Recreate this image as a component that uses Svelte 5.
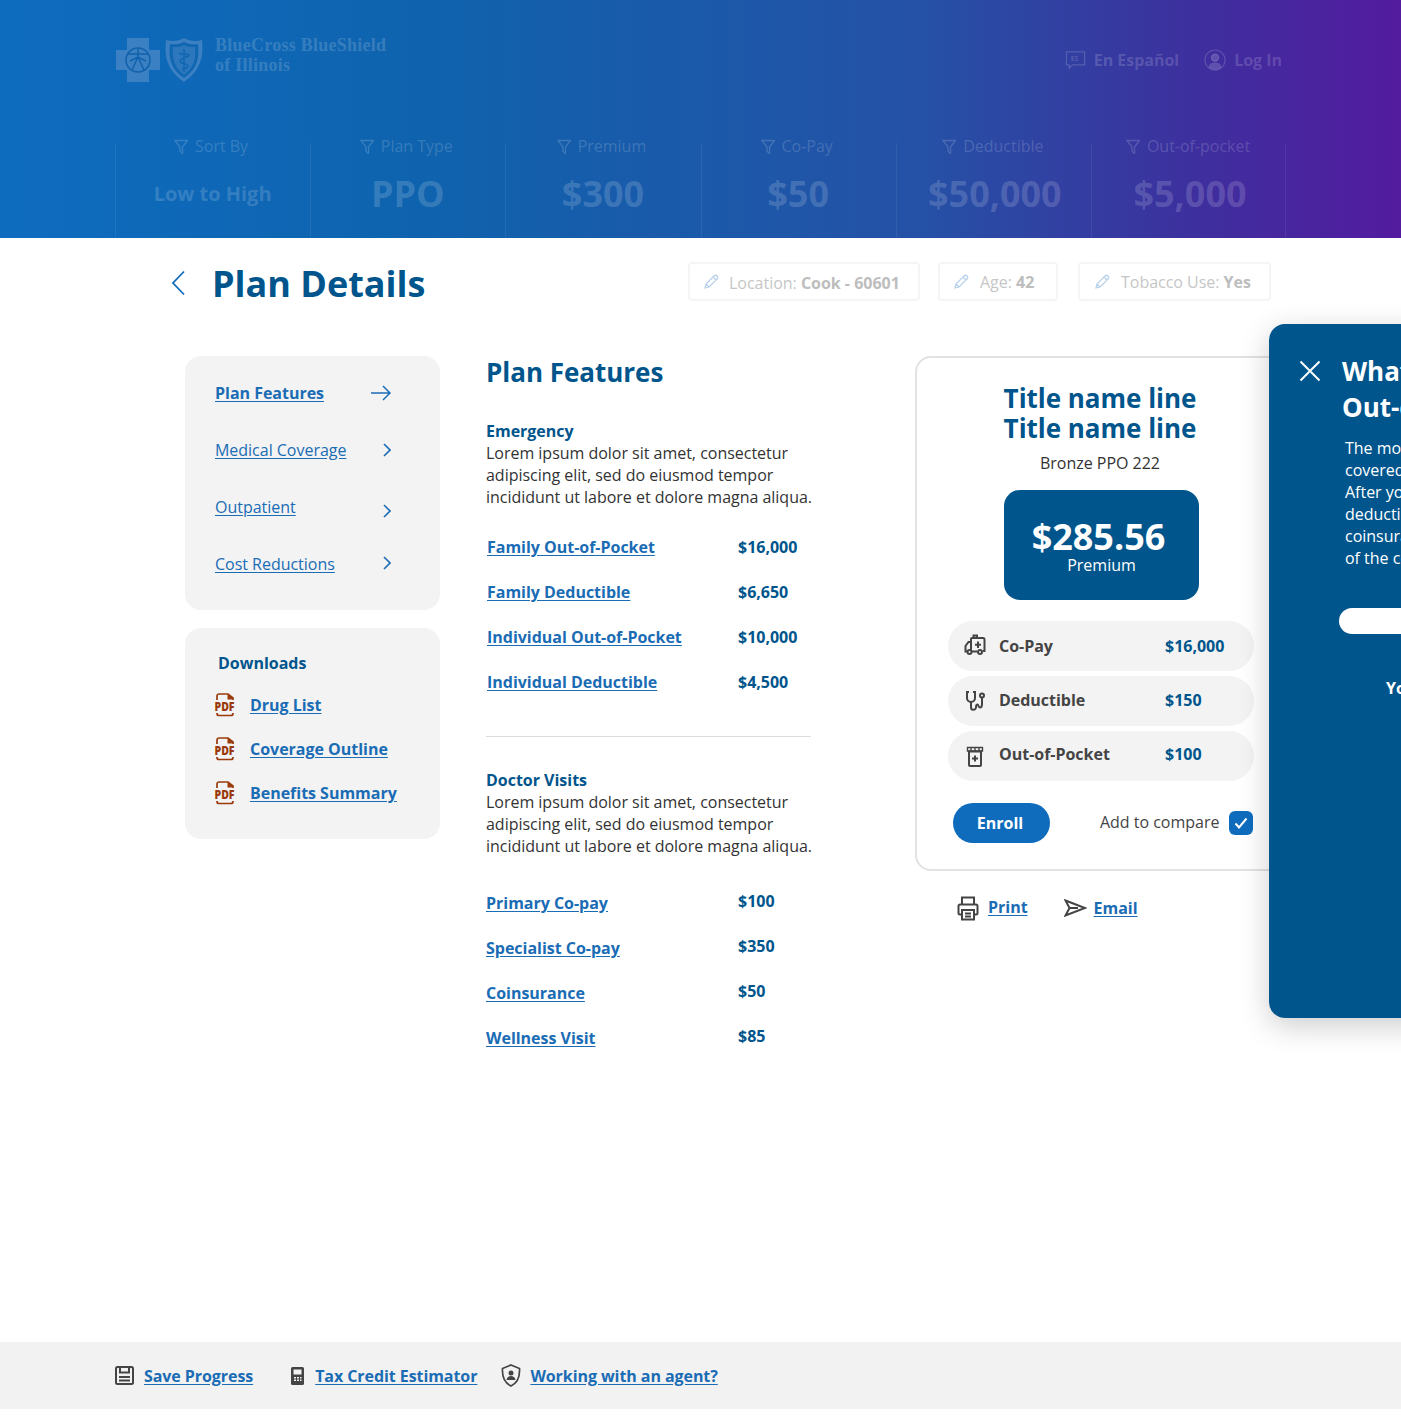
<script>
  const filters = [
    { label: 'Sort By', value: 'Low to High', small: true },
    { label: 'Plan Type', value: 'PPO' },
    { label: 'Premium', value: '$300' },
    { label: 'Co-Pay', value: '$50' },
    { label: 'Deductible', value: '$50,000' },
    { label: 'Out-of-pocket', value: '$5,000' }
  ];
  const nav = [
    { label: 'Plan Features', active: true, nudge: 0 },
    { label: 'Medical Coverage', nudge: 0 },
    { label: 'Outpatient', nudge: 4 },
    { label: 'Cost Reductions', nudge: -1 }
  ];
  const downloads = ['Drug List', 'Coverage Outline', 'Benefits Summary'];
  const sectionA = [
    ['Family Out-of-Pocket', '$16,000'],
    ['Family Deductible', '$6,650'],
    ['Individual Out-of-Pocket', '$10,000'],
    ['Individual Deductible', '$4,500']
  ];
  const sectionB = [
    ['Primary Co-pay', '$100'],
    ['Specialist Co-pay', '$350'],
    ['Coinsurance', '$50'],
    ['Wellness Visit', '$85']
  ];
</script>

<div class="page">
  <header class="hero">
    <div class="topbar">
      <div class="logo">
        <svg width="90" height="46" viewBox="0 0 90 46" class="marks">
          <path d="M11 0h22v12h11v20H33v12H11V32H0V12h11z" fill="#3a80c2" />
          <circle cx="22" cy="22" r="12" fill="#3a80c2" stroke="#1060ab" stroke-width="1.500" />
          <path d="M12 16l20 0M22 11v8M16 32l6-13 6 13M14 23l8-4 8 4" stroke="#1060ab" stroke-width="1.500" fill="none" />
          <path d="M68 0c-5 3-12 4-18 2-1 12-2 28 18 42 20-14 19-30 18-42-6 2-13 1-18-2z" fill="#3a80c2" />
          <path d="M68 4c-4 2-9 3-14 2-1 11-1 24 14 34 15-10 15-23 14-34-5 1-10 0-14-2z" fill="#1166b2" />
          <path d="M68 7c-3 2-7 2-11 2-1 9 0 20 11 28 11-8 12-19 11-28-4 0-8 0-11-2z" fill="#2d78bd" />
          <path d="M68 11v23M63 15c5 3 9 0 10 2s-9 3-9 6 8 2 8 5-4 2-6 3" stroke="#1166b2" stroke-width="1.600" fill="none" />
        </svg>
        <div class="logotext">BlueCross BlueShield<br />of Illinois</div>
      </div>
      <nav class="util">
        <span class="util-item">
          <svg width="21" height="21" viewBox="0 0 22 22" fill="none" stroke="currentColor" stroke-width="1.300"><path d="M1.500 2h19v13.500H8L4.500 19v-3.500h-3z" /><text x="6" y="11.500" font-size="7" fill="currentColor" stroke="none" font-family="Open Sans">ES</text></svg>
          En Español
        </span>
        <span class="util-item">
          <svg width="22" height="22" viewBox="0 0 23 23" fill="none" stroke="currentColor" stroke-width="1.200"><circle cx="11.500" cy="11.500" r="10.500" /><circle cx="11.500" cy="9" r="3.800" fill="currentColor" /><path d="M4.500 19c1-4 4-5 7-5s6 1 7 5a10 10 0 0 1-14 0z" fill="currentColor" stroke="none" /></svg>
          Log In
        </span>
      </nav>
    </div>
    <div class="filters">
      {#each filters as f}
        <div class="filter">
          <div class="f-label">
            <svg width="14" height="16" viewBox="0 0 14 16" fill="none" stroke="currentColor" stroke-width="1.300"><path d="M1 2.500h12.500L8.500 9V15.500L6 13.500V9z" /></svg>
            {f.label}
          </div>
          <div class="f-value" class:small={f.small}>{f.value}</div>
        </div>
      {/each}
    </div>
  </header>

  <div class="titlebar">
    <div class="title-left">
      <svg class="back" width="14" height="26" viewBox="0 0 14 26" fill="none" stroke="#0f6cbd" stroke-width="1.800"><path d="M13 1.500L2 13l11 11.500" /></svg>
      <h1>Plan Details</h1>
    </div>
    <div class="chips">
      <span class="chip c1"><svg width="16" height="16" viewBox="0 0 16 16" fill="none" stroke="currentColor" stroke-width="1.200"><path d="M2 14l1-4 8-8a1.600 1.600 0 0 1 3 3l-8 8zM3 10l3 3M10 3l3 3" /></svg><span class="low">Location: <b>Cook - 60601</b></span></span>
      <span class="chip c2"><svg width="16" height="16" viewBox="0 0 16 16" fill="none" stroke="currentColor" stroke-width="1.200"><path d="M2 14l1-4 8-8a1.600 1.600 0 0 1 3 3l-8 8zM3 10l3 3M10 3l3 3" /></svg><span>Age: <b>42</b></span></span>
      <span class="chip c3"><svg width="16" height="16" viewBox="0 0 16 16" fill="none" stroke="currentColor" stroke-width="1.200"><path d="M2 14l1-4 8-8a1.600 1.600 0 0 1 3 3l-8 8zM3 10l3 3M10 3l3 3" /></svg><span>Tobacco Use: <b>Yes</b></span></span>
    </div>
  </div>

  <main class="content">
    <aside class="side">
      <div class="box nav-box">
        {#each nav as n}
          <div class="nav-row">
            <a href="#top" class:strong={n.active}>{n.label}</a>
            {#if n.active}
              <svg width="20" height="16" viewBox="0 0 20 16" fill="none" stroke="#1a6cb5" stroke-width="1.500"><path d="M0 8h19M12 1l7 7-7 7" /></svg>
            {:else}
              <svg class="chev" style="--nudge:{n.nudge}px" width="8" height="14" viewBox="0 0 8 14" fill="none" stroke="#1a6cb5" stroke-width="1.600"><path d="M1 1l6 6-6 6" /></svg>
            {/if}
          </div>
        {/each}
      </div>
      <div class="box dl-box">
        <div class="dl-title">Downloads</div>
        {#each downloads as d}
          <div class="dl-row">
            <svg width="22" height="24" viewBox="0 0 22 24" fill="none" stroke="#9a3a0b" stroke-width="1.700">
              <path d="M3 7V3a2 2 0 0 1 2-2h9l5 4v2M3 20v.5a2 2 0 0 0 2 2h12a2 2 0 0 0 2-2V20" />
              <path d="M13.500 1v5.500h6z" fill="#9a3a0b" stroke="none" />
              <text x="0.500" y="18" font-size="11.500" font-weight="800" textLength="20" lengthAdjust="spacingAndGlyphs" fill="#9a3a0b" stroke="none" font-family="Open Sans">PDF</text>
            </svg>
            <a href="#top">{d}</a>
          </div>
        {/each}
      </div>
    </aside>

    <section class="features">
      <h2>Plan Features</h2>
      <div class="group first">
        <h3>Emergency</h3>
        <p>Lorem ipsum dolor sit amet, consectetur<br />adipiscing elit, sed do eiusmod tempor<br />incididunt ut labore et dolore magna aliqua.</p>
      </div>
      <div class="rows a">
        {#each sectionA as r}
          <a href="#top">{r[0]}</a><span>{r[1]}</span>
        {/each}
      </div>
      <hr />
      <div class="group">
        <h3>Doctor Visits</h3>
        <p>Lorem ipsum dolor sit amet, consectetur<br />adipiscing elit, sed do eiusmod tempor<br />incididunt ut labore et dolore magna aliqua.</p>
      </div>
      <div class="rows b">
        {#each sectionB as r}
          <a href="#top">{r[0]}</a><span>{r[1]}</span>
        {/each}
      </div>
    </section>

    <section class="plan">
      <div class="card">
        <div class="card-title">Title name line<br />Title name line</div>
        <div class="card-sub">Bronze PPO 222</div>
        <div class="premium">
          <div class="price">$285.56</div>
          <div class="price-label">Premium</div>
        </div>
        <div class="pills">
          <div class="pill">
            <svg class="amb" width="22" height="22" viewBox="0 0 22 22" fill="none" stroke="#444" stroke-width="2"><path d="M7 17V5a1 1 0 0 1 1-1h11a1.500 1.500 0 0 1 1.500 1.500V17H19M13 17.500H8M7 8H4.500L1.500 12v5.500H3M9.500 4V1.500H13V4" /><path d="M14 7.500v6.500M11 10.700h6" /><circle cx="5.500" cy="18" r="2" /><circle cx="16" cy="18" r="2" /></svg>
            <span class="p-label">Co-Pay</span><span class="p-value">$16,000</span>
          </div>
          <div class="pill">
            <svg width="22" height="24" viewBox="0 0 22 24" fill="none" stroke="#444" stroke-width="2"><path d="M5 3H3v6a4 4 0 0 0 8 0V3H9" /><path d="M7 13v5a2.500 2.500 0 0 0 5 .5c0-2 .5-3 1.500-3 1 0 1 3 2.500 3s2-1.500 2-3.500V9" /><circle cx="18" cy="6.500" r="2" /></svg>
            <span class="p-label">Deductible</span><span class="p-value">$150</span>
          </div>
          <div class="pill">
            <svg width="22" height="22" viewBox="0 0 22 22" fill="none" stroke="#444" stroke-width="2"><path d="M5 6.500h12V20a1 1 0 0 1-1 1H6a1 1 0 0 1-1-1zM11 10.500v6M8 13.500h6" /><path d="M3.500 2.500h15V6h-15zM7 2.500V6M11 2.500V6M15 2.500V6" stroke-width="1.400" /></svg>
            <span class="p-label">Out-of-Pocket</span><span class="p-value">$100</span>
          </div>
        </div>
        <div class="actions">
          <button class="enroll">Enroll</button>
          <label class="compare">
            <span>Add to compare</span>
            <span class="check"><svg width="14" height="12" viewBox="0 0 14 12" fill="none" stroke="#fff" stroke-width="2"><path d="M1.500 6.500L5 10.500 12.500 1.500" /></svg></span>
          </label>
        </div>
      </div>
      <div class="share">
        <svg width="22" height="25" viewBox="0 0 22 25" fill="none" stroke="#444" stroke-width="2"><path d="M5 8V1.500h12V8M5 18.500H3a1.500 1.500 0 0 1-1.500-1.500V10A1.500 1.500 0 0 1 3 8.500h16a1.500 1.500 0 0 1 1.500 1.500v7a1.500 1.500 0 0 1-1.500 1.500h-2M5 14h12v9.500H5zM8 17.500h6M8 20.500h6" /></svg>
        <a href="#top" class="print">Print</a>
        <svg width="23" height="18" viewBox="0 0 23 18" fill="none" stroke="#444" stroke-width="2"><path d="M1.500 1.500L21 9 1.500 16.500 5.500 9zM5.500 9H14" /></svg>
        <a href="#top" class="email">Email</a>
      </div>
    </section>

    <aside class="drawer">
      <div class="drawer-head">
        <svg width="22" height="22" viewBox="0 0 22 22" stroke="#fff" stroke-width="2" fill="none"><path d="M1.500 1.500l19 19M20.500 1.500l-19 19" /></svg>
        <div class="drawer-title">What is an<br />Out-of-Pocket Max?</div>
      </div>
      <p class="drawer-text">The most you pay for<br />covered services in a plan year.<br />After you spend this amount on<br />deductibles, copayments and<br />coinsurance, your plan pays 100%<br />of the costs of covered benefits.</p>
      <div class="drawer-pill"></div>
      <div class="drawer-note">You</div>
    </aside>
  </main>

  <footer class="foot">
    <svg width="19" height="19" viewBox="0 0 19 19" fill="none" stroke="#444" stroke-width="2"><rect x="1" y="1" width="17" height="17" rx="1.500" /><path d="M5 1v5.500h9V1M4 11h11M4 14.500h11" /></svg>
    <a href="#top" class="f1">Save Progress</a>
    <svg class="f-calc" width="13" height="18" viewBox="0 0 13 18"><rect width="13" height="18" rx="1.500" fill="#444" /><rect x="2.500" y="2.500" width="8" height="5" fill="#f2f2f2" /><path d="M3 10h2v1.500H3zM6 10h2v1.500H6zM9 10h1.500v1.500H9zM3 12.500h2V14H3zM6 12.500h2V14H6zM9 12.500h1.500V14H9z" fill="#f2f2f2" /></svg>
    <a href="#top" class="f2">Tax Credit Estimator</a>
    <svg class="f-shield" width="20" height="23" viewBox="0 0 20 23" fill="none" stroke="#444" stroke-width="1.700"><path d="M10 1l8.500 3.500c.5 8-1 14-8.500 17.500C2.500 18.500 1 12.500 1.500 4.500z" /><circle cx="10" cy="9" r="2.500" fill="#444" stroke="none" /><path d="M5.500 16c.5-3 2.500-4 4.500-4s4 1 4.500 4z" fill="#444" stroke="none" /></svg>
    <a href="#top" class="f3">Working with an agent?</a>
  </footer>
</div>

<style>
  :global(body) { margin: 0; background: #fff; font-family: "Open Sans", "Liberation Sans", sans-serif; }
  .page { position: relative; width: 1401px; height: 1415px; overflow: hidden; color: #333; font-size: 16px; line-height: 22px; letter-spacing: -.02px; }
  a { color: #1a6cb5; font-weight: 700; text-decoration: underline; text-underline-offset: 2px; }

  .hero { height: 238px; background: linear-gradient(90deg, #0e6cbf 0%, #0f63ae 30%, #2551a6 66%, #3d309e 85%, #531b9f 100%); color: rgba(255,255,255,.17); overflow: hidden; }
  .topbar { height: 136px; display: flex; justify-content: space-between; box-sizing: border-box; padding: 35px 119px 0 116px; }
  .logo { display: flex; gap: 9px; color: rgba(255,255,255,.18); }
  .marks { margin-top: 3px; }
  .logotext { font-family: "Liberation Serif", serif; font-weight: 700; font-size: 18px; line-height: 20px; letter-spacing: .25px; }
  .util { display: flex; gap: 25px; height: 48px; margin-top: 1px; font-weight: 700; }
  .util-item { display: flex; align-items: center; gap: 8px; }
  .filters { display: flex; padding-left: 115px; }
  .filter { position: relative; width: 195.200px; text-align: center; height: 102px; }
  .filter::before { content: ""; position: absolute; left: 0; top: 7px; bottom: 0; width: 1px; background: rgba(255,255,255,.07); }
  .filter:last-child::after { content: ""; position: absolute; right: 0; top: 7px; bottom: 0; width: 1px; background: rgba(255,255,255,.07); }
  .f-label { display: flex; justify-content: center; align-items: center; gap: 7px; height: 20px; padding-right: 3px; }
  .filter:nth-child(n+5) .f-label { padding-right: 1px; }
  .f-value { font-size: 36px; font-weight: 700; line-height: 50px; margin-top: 13px; }
  .f-value.small { font-size: 20px; }
  .filter:nth-child(n+5) .f-value { padding-left: 3px; }

  .titlebar { height: 86px; display: flex; justify-content: space-between; }
  .title-left { display: flex; align-items: flex-start; }
  .back { margin: 32px 27px 0 171px; }
  h1 { margin: 21px 0 0; font-size: 36px; line-height: 50px; color: #00558c; font-weight: 700; }
  .chips { display: flex; margin: 24px 130px 0 0; gap: 18px; }
  .chip { display: flex; align-items: center; box-sizing: border-box; height: 39px; border: 2px solid #f5f5f5; border-radius: 4px; color: #c6c6c6; padding: 0 0 0 13px; gap: 10px; white-space: nowrap; }
  .chip svg { color: #b5d0ea; flex: none; }
  .chip b { color: #bdbdbd; }
  .low { position: relative; top: 1px; }
  .c1 { width: 232px; }
  .c2 { width: 120px; gap: 11px; }
  .c3 { width: 193px; gap: 11px; margin-left: 2px; padding-left: 14px; }

  .content { position: relative; height: 1018px; box-sizing: border-box; padding: 32px 0 0 185px; display: grid; grid-template-columns: 255px 383px 370px; column-gap: 46px; align-items: start; }
  .box { background: #f3f3f3; border-radius: 16px; }
  .side { display: flex; flex-direction: column; gap: 18px; }
  .nav-box { height: 254px; box-sizing: border-box; padding: 8px 49px 0 30px; }
  .nav-row { height: 57px; display: flex; justify-content: space-between; align-items: center; }
  .nav-row a { font-weight: 400; }
  .nav-row a.strong { font-weight: 700; }
  .chev { transform: translateY(var(--nudge)); }
  .dl-box { height: 211px; box-sizing: border-box; padding: 24px 0 0 29px; }
  .dl-title { font-weight: 700; color: #00558c; margin: 0 0 9px 4px; }
  .dl-row { display: flex; align-items: center; gap: 14px; height: 44px; }

  h2 { margin: -1px 0 0; font-size: 26px; line-height: 34px; color: #00558c; }
  h3 { margin: 0; font-size: 16px; line-height: 22px; color: #00558c; }
  p { margin: 0; }
  .group.first { margin-top: 31px; }
  .rows { display: grid; grid-template-columns: 251px auto; grid-auto-rows: 45px; align-items: center; margin-top: 16px; margin-left: 1px; }
  .rows span { color: #00558c; font-weight: 700; }
  .rows.b { margin-left: 0; margin-top: 23px; grid-template-columns: 252px auto; }
  .rows.b span { position: relative; top: -2px; }
  hr { width: 325px; margin: 32px 0 32px; border: 0; border-top: 1px solid #dcdcdc; }

  .card { height: 515px; box-sizing: border-box; border: 2px solid #e2e2e2; border-radius: 16px; padding-top: 25px; position: relative; }
  .card-title { font-size: 26px; font-weight: 700; line-height: 30px; color: #00558c; text-align: center; width: 366px; }
  .card-sub { text-align: center; margin-top: 9px; width: 366px; }
  .premium { width: 195px; height: 110px; margin: 16px 0 0 87px; background: #00558c; border-radius: 16px; color: #fff; text-align: center; box-sizing: border-box; padding-top: 26px; }
  .price { font-size: 36px; font-weight: 700; line-height: 42px; margin-left: -6px; }
  .price-label { line-height: 22px; margin-top: -4px; }
  .pills { display: flex; flex-direction: column; gap: 5px; margin: 21px 0 0 31px; width: 306px; }
  .pill { height: 50px; border-radius: 25px; background: #f3f3f3; display: flex; align-items: center; padding-left: 16px; font-weight: 700; }
  .amb { position: relative; top: -1px; }
  .pill span { position: relative; }
  .pill:nth-child(2) span { top: -1px; }
  .pill:nth-child(3) span { top: -2px; }
  .p-label { margin-left: 13px; width: 166px; color: #444; }
  .p-value { color: #00558c; }
  .actions { display: flex; align-items: center; margin: 22px 0 0 36px; }
  .enroll { width: 97px; height: 40px; border: 0; padding: 0 3px 0 0; border-radius: 20px; background: #0f6cbd; color: #fff; font: 700 16px "Open Sans", sans-serif; }
  .compare { display: flex; align-items: center; gap: 10px; margin-left: 50px; color: #444; }
  .compare > span:first-child { position: relative; top: -1px; }
  .check { width: 24px; height: 24px; border-radius: 6px; background: #0f6cbd; display: flex; align-items: center; justify-content: center; }
  .share { display: flex; align-items: center; margin: 24px 0 0 42px; height: 26px; }
  .print { margin-left: 9px; position: relative; top: -1px; }
  .share svg:nth-of-type(2) { margin-left: 36px; }
  .email { margin-left: 7px; }

  .drawer { position: absolute; left: 1269px; top: 0; width: 400px; height: 694px; background: #00558c; border-radius: 16px; color: #fff; box-shadow: 0 8px 30px rgba(0,0,0,.2); box-sizing: border-box; padding: 29px 0 0 30px; }
  .drawer-head { display: flex; gap: 21px; align-items: flex-start; }
  .drawer-head svg { margin-top: 7px; flex: none; }
  .drawer-title { font-size: 26px; font-weight: 700; line-height: 36px; white-space: nowrap; }
  .drawer-text { margin: 12px 0 0 46px; white-space: nowrap; }
  .drawer-pill { width: 340px; height: 26px; border-radius: 13px; background: #fff; margin: 39px 0 0 40px; }
  .drawer-note { font-weight: 700; margin: 43px 0 0 87px; }

  .foot { height: 67px; background: #f2f2f2; display: flex; align-items: center; padding-left: 115px; letter-spacing: -.07px; }
  .foot svg { flex: none; }
  .f1 { margin-left: 10px; }
  .f-calc { margin-left: 38px; }
  .f2 { margin-left: 11px; }
  .f-shield { margin-left: 24px; }
  .f3 { margin-left: 9px; }
</style>
